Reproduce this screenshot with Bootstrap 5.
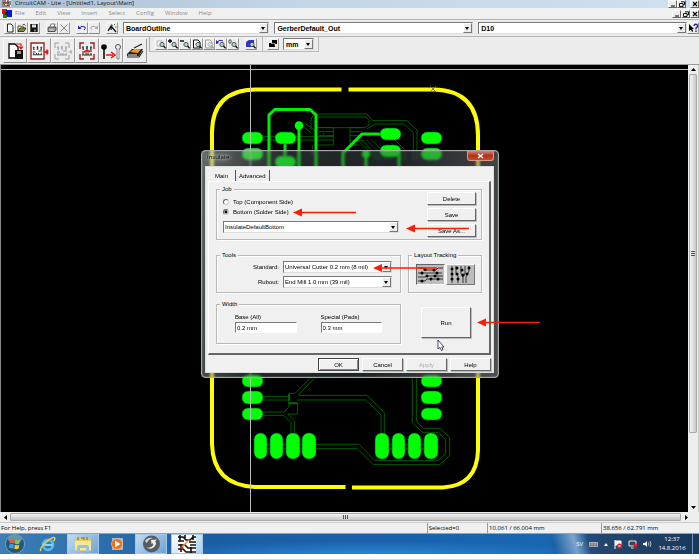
<!DOCTYPE html>
<html lang="en">
<head>
<meta charset="utf-8">
<meta name="viewport" content="width=device-width, initial-scale=1">
<title>CircuitCAM - Lite</title>
<link href="https://cdn.jsdelivr.net/npm/bootstrap@5.3.0/dist/css/bootstrap.min.css" rel="stylesheet">
<style>
body{font:6px/9px "Open Sans","Noto Sans",sans-serif;color:#000;background:#fff;overflow:hidden}
button,select,input{font:inherit;color:inherit;border-radius:0}
svg{display:block;flex:none}
.app{padding-bottom:6px}
.titlebar{height:8px;background:linear-gradient(90deg,#a9bfd4,#c2d5e8 40%,#cfe0ef);padding-left:2px}
.titlebar span.caption{line-height:6px;color:#111}
.winbtn{width:9px;height:8px;padding:0;border:1px solid;border-color:#fff #666 #666 #fff;background:#ececec;display:flex;align-items:center;justify-content:center}
.menubar{height:11px;background:#f0f0f0;padding-left:2px}
.menulist{gap:11px;margin-left:3px}
.menubar a{color:#8a8a8a;text-decoration:none;line-height:11px}
.toolrow{background:#ececec;border-top:1px solid #b4b4b4}
.row-one{height:17px;padding-left:4px}
.row-two{height:29px;padding-left:3px;border-bottom:1px solid #999}
.tool{width:12px;height:12px;padding:0;border:1px solid;border-color:#fafafa #999 #888 #fafafa;background:#ededed;display:flex;align-items:center;justify-content:center;flex:none}
.tool-lg{width:24px;height:25px}
.space{width:6px;flex:none}
.combos{padding-left:5px;gap:5px}
.combo{position:relative;min-width:0}
.combo select{appearance:none;width:100%;height:12px;display:block;border:1px solid;border-color:#777 #ddd #ddd #777;background:#fff;padding:0 10px 0 1px;line-height:9px;outline:0}
.combo::before{content:"";position:absolute;right:1px;top:1px;bottom:1px;width:9px;background:#ececec;border:1px solid;border-color:#fff #777 #777 #fff;pointer-events:none}
.combo::after{content:"";position:absolute;right:4px;top:5px;border:2px solid transparent;border-top:3px solid #000;border-bottom:0;pointer-events:none}
.toolcombo{font:bold 7px/9px "Liberation Sans",sans-serif}
.toolcombo select{padding-left:2px}
.layer{flex:148}.aperlist{flex:201}.aper{flex:211}.unit{width:31px}
.smallbar{height:15px;border-left:1px solid #aaa;border-right:1px solid #bbb;border-bottom:1px solid #bbb;padding:1px 5px;margin-left:2px}
.unitbar{padding:1px 4px;margin-left:0;gap:4px}
.work{min-height:447px}
.canvas{background:#000;position:relative;overflow:hidden;border-left:1px solid #888;min-width:0}
.board{margin-left:-1px}
.over{position:absolute;left:-1px;top:0;pointer-events:none;z-index:3}
.vbar{width:11px;background:#eee;border-right:1px solid #ccc}
.vthumb{flex:0 1 359px;width:8px;border:1px solid #aaa;background:linear-gradient(90deg,#f5f5f5,#c8c8c8);border-radius:1px}
.hbar{height:10px;background:#eee}
.hthumb{height:8px;border:1px solid #aaa;background:linear-gradient(#f4f4f4,#c4c4c4);border-radius:1px}
.barbtn{width:10px;height:9px;border:0;padding:0;background:transparent;display:flex;align-items:center;justify-content:center;flex:none}
.status{height:11px;background:#f0f0f0;border-top:1px solid #ccc;line-height:10px}
.status>div{white-space:nowrap;padding-left:1px}
.status>div+div{border-left:1px solid #999}
.st-a{flex:430}.st-b{flex:59}.st-c{flex:113}.st-d{flex:97}
.task{height:21px;background:radial-gradient(ellipse at 53% 100%,#2c83d2,transparent 45%),linear-gradient(75deg,transparent 79%,#7ba6cd 82%,transparent 84%),linear-gradient(90deg,#3e7eb4,#1b5da3 30%,#1767b3 78%,#23466e 86%,#18385e);border-top:1px solid #7fa8ca;color:#fff;padding-left:5px}
.task button{height:20px;padding:0;border:0;background:transparent;display:flex;align-items:center;justify-content:center}
.task .running{width:32px;border:1px solid #a5c8e6;background:linear-gradient(135deg,#c2dbef,#6ea4d3)}
.task .running.current{background:linear-gradient(135deg,#fff,#a8cff0)}
.quick{gap:10px}
.tray{gap:6px}
.task .desk{width:7px;border-left:1px solid #7793b0}
.clock{line-height:9px;width:40px}
.insulate{position:absolute;left:200px;top:85px;width:298px;padding:0 4px 4px 3px;border:1px solid #a5a9a9;border-radius:4px;background:linear-gradient(100deg,rgba(165,175,175,.6),rgba(90,100,105,.4) 25%,rgba(70,80,85,.45) 60%,rgba(130,135,135,.6));backdrop-filter:blur(1px);box-shadow:inset 0 0 1px #fff;font-family:"Liberation Sans",sans-serif;z-index:2}
.insulate header{height:15px;padding-left:2px;font:6px/13px "Open Sans",sans-serif;color:#000}
.insulate header span{text-shadow:0 0 3px #ddd,0 0 4px #ccc,0 0 6px #ccc}
.close-x{width:27px;height:10px;border:1px solid #d79a8c;border-top:0;border-radius:0 0 3px 3px;background:linear-gradient(#d68a78,#b52e16 50%,#c84a2c);padding:0;display:flex;align-items:center;justify-content:center}
.sheet{background:#f0f0f0;border:1px solid #ddd;padding:3px 2px 1px}
.tabs{height:11px}
.tabs button{border:0;background:transparent;padding:0 7px;line-height:10px;border-right:1px solid #555}
.tabs button+button{padding:1px 3px 0;line-height:10px}
.pane{border:1px solid;border-color:#fff #666 #666 #fff;padding:7px 8px 9px 7px;border-right-width:2px;border-bottom-width:2px;display:grid;grid-template-columns:185px 74px;column-gap:7px;row-gap:15px}
.group{border:1px solid #b8b8b8;box-shadow:inset 1px 1px #fff,1px 1px #fff;position:relative;margin:0;padding:0;min-width:0}
.group>legend{position:absolute;left:3px;top:-5px;font-size:6px;line-height:9px;background:#f0f0f0;padding:0 2px;width:auto;margin:0;float:none}
.job{grid-column:1/3;height:51px;padding:2px 5px 2px 6px}
.jobmain{width:176px;padding-top:5px}
.jobmain .combo{margin-top:4px}
.job label{line-height:10px;display:flex;align-items:center;gap:4px}
.job input{appearance:none;width:6px;height:6px;margin:0;border:1px solid;border-color:#666 #ccc #ccc #666;border-radius:50%;background:#fff}
.job input:checked{background:radial-gradient(circle,#000 1px,#fff 2px)}
.bevel{border:1px solid;border-color:#fff #666 #666 #fff;background:#f0f0f0;padding:0;line-height:10px;height:13px;box-shadow:1px 1px #bbb}
.bevel:disabled{color:#aaa}
.jobbtns{width:49px;gap:3px}
.tools{height:38px;padding:5px 8px 0 0;gap:3px}
.tools .combo{width:109px}
.tracking{height:38px;padding:8px 6px 0 7px}
.track{width:29px;height:21px;padding:0;border:1px solid;border-color:#fff #777 #777 #fff;background:#bdbdbd}
.track.active{border-color:#666 #fff #fff #666}
.sizes{height:40px;padding:8px 18px;gap:24px;margin-top:-4px}
.sizes>div{flex:1 1 0;min-width:0}
.sizes label{display:block;line-height:9px}
.sizes input{width:100%;height:11px;border:1px solid;border-color:#777 #fff #fff #777;padding:0 1px;background:#fff;display:block}
.run{width:50px;height:31px;margin:-1px 0 0 13px}
.foot{gap:3px;padding-top:3px}
.foot .bevel{width:41px}
.foot .default{border:1px solid #444;box-shadow:inset 1px 1px #fff,inset -1px -1px #888}
</style>
<script src="https://cdn.jsdelivr.net/npm/bootstrap@5.3.0/dist/js/bootstrap.bundle.min.js"></script>
</head>
<body>
<svg width="0" height="0" class="position-absolute" aria-hidden="true">
<defs>
<symbol id="lens" viewBox="0 0 10 10"><circle cx="6" cy="5.5" r="2.1" fill="#9fe0e0" stroke="#333" stroke-width=".8"/><path d="M7.5 7 9.6 9.3" stroke="#111" stroke-width="1.4"/></symbol>
<symbol id="pcb" viewBox="0 0 18 18"><path d="M4 5h2M8 5h2M12 5h2M5 7h1M8 7h2M12 7h1M4 13h10M5 11v2M8 11v2M10 11v2M13 11v2M5 5v3M9 4v3M13 5v3M4 10h3M10 9h4" stroke="currentColor" fill="none"/></symbol>
<symbol id="min" viewBox="0 0 6 6"><path d="M1 5h4" stroke="#000"/></symbol>
<symbol id="res" viewBox="0 0 6 6"><path d="M2 .8h3.5v3H4M.5 2.5H4v3H.5z" stroke="#000" stroke-width=".9" fill="none"/></symbol>
<symbol id="cls" viewBox="0 0 6 6"><path d="m1 1 4 4m0-4L1 5" stroke="#000" stroke-width="1.2"/></symbol>
</defs></svg>

<div class="app d-flex flex-column min-vh-100">
<div class="titlebar d-flex align-items-start">
<svg width="9" height="7" viewBox="0 0 9 7"><path d="M0 0h9v7H0z" fill="#eee"/><path d="M1 0v5M3 0v3M6 0v6M8 1v4M1 3h6M0 6h8" stroke="#222"/><path d="m2 5 4-4" stroke="#c33"/></svg>
<span class="caption ms-1">CircuitCAM - Lite - [Untitled1, Layout\Main]</span>
<div class="d-flex ms-auto"><button class="winbtn" aria-label="Minimize"><svg width="6" height="6"><use href="#min"/></svg></button><button class="winbtn" aria-label="Restore"><svg width="6" height="6"><use href="#res"/></svg></button><button class="winbtn ms-1" aria-label="Close"><svg width="6" height="6"><use href="#cls"/></svg></button></div>
</div>
<nav class="menubar d-flex align-items-center">
<svg width="10" height="9" viewBox="0 0 10 9"><path d="M0 0h5v5H0z" fill="#d11"/><path d="M4 1h6v7H4z" fill="#11d"/><path d="M1 5h4v4H1z" fill="#181"/><path d="M3 3h3v3H3z" fill="#222"/></svg>
<div class="menulist d-flex"><a href="#">File</a><a href="#">Edit</a><a href="#">View</a><a href="#">Insert</a><a href="#">Select</a><a href="#">Config</a><a href="#">Window</a><a href="#">Help</a></div>
<div class="d-flex ms-auto"><button class="winbtn" aria-label="Minimize document"><svg width="6" height="6"><use href="#min"/></svg></button><button class="winbtn" aria-label="Restore document"><svg width="6" height="6"><use href="#res"/></svg></button><button class="winbtn" aria-label="Close document"><svg width="6" height="6"><use href="#cls"/></svg></button></div>
</nav>

<div class="toolrow row-one d-flex align-items-center">
<button class="tool" aria-label="New"><svg width="10" height="10" viewBox="0 0 10 10"><path d="M2.5 1h3.5l2 2v6h-5.500z" fill="#fff" stroke="#111" stroke-width=".9"/></svg></button>
<button class="tool" aria-label="Open"><svg width="10" height="10" viewBox="0 0 10 10"><path d="M1 8.500V3h3l.5 1H7v1" fill="#ff8" stroke="#222" stroke-width=".8"/><path d="m1 8.500 2-3.500h6l-2 3.500z" fill="#883" stroke="#222" stroke-width=".8"/><path d="M5.500 2q2-1.500 3 .5" stroke="#111" fill="none" stroke-width=".8"/></svg></button>
<button class="tool" aria-label="Save"><svg width="10" height="10" viewBox="0 0 10 10"><path d="M1 1h8v8H1z" fill="#111"/><path d="M3 1.500h4v3H3z" fill="#ddd"/><path d="M1.500 1v8M8.500 1v8" stroke="#775" stroke-width=".7"/><path d="M5.500 6.500h1v2h-1z" fill="#eee"/></svg></button>
<span class="space"></span>
<button class="tool" aria-label="Print"><svg width="10" height="10" viewBox="0 0 10 10"><path d="m3 4 1-3h4L7 4" fill="#fff" stroke="#555" stroke-width=".8"/><path d="M1 4.500 2 4h7v3L8 8.500H1z" fill="#999" stroke="#333" stroke-width=".8"/><path d="M2 7h5" stroke="#ddd"/></svg></button>
<button class="tool" aria-label="Delete item"><svg width="10" height="10" viewBox="0 0 10 10"><path d="m1.500 1.500 7 7m0-7-7 7" stroke="#888"/></svg></button>
<span class="space"></span>
<button class="tool" aria-label="Undo"><svg width="10" height="10" viewBox="0 0 10 10"><path d="M2 5q3-3 6-1 .8 1.500-1 3" stroke="#22a" fill="none"/><path d="M1 2.500V6h3.500z" fill="#22a"/></svg></button>
<button class="tool" aria-label="Redo"><svg width="10" height="10" viewBox="0 0 10 10"><path d="M8 5Q5 2 2 4q-.8 1.500 1 3" stroke="#aaa" fill="none"/><path d="M9 2.500V6H5.500z" fill="#aaa"/></svg></button>
<span class="space"></span>
<button class="tool" aria-label="Wizard"><svg width="10" height="10" viewBox="0 0 10 10"><path d="m1 8 3-5v4M4 3l5 6" stroke="#111" stroke-width="1.300" fill="none"/><path d="m5 2 1 1m2-2L7 2m1 2h1.500" stroke="#383"/></svg></button>
<div class="toolcombo combos d-flex flex-grow-1">
<div class="combo layer"><select aria-label="Layer"><option>BoardOutline</option></select></div>
<div class="combo aperlist"><select aria-label="Aperture list"><option>GerberDefault_Out</option></select></div>
<div class="combo aper"><select aria-label="Aperture"><option>D10</option></select></div>
</div>
<button class="tool" aria-label="Context help"><svg width="11" height="10" viewBox="0 0 11 10"><path d="M1 1v7l2-1.500L4 9l1-.5L4.300 6H6z" fill="#000"/><path d="M6 3q.3-2 2.300-1.700Q10.300 2 9.300 3.800L8 5v1.500M8 7.500V9" stroke="#229" stroke-width="1.400" fill="none"/></svg></button>
</div>

<div class="toolrow row-two d-flex">
<div class="d-flex align-items-center">
<button class="tool tool-lg" aria-label="Import"><svg width="20" height="20" viewBox="0 0 20 20"><path d="M4 3h6l3 3v11H4z" fill="#fff" stroke="#000" stroke-width="1.300"/><path d="M10 9h8v9h-8z" fill="#111"/><path d="M12 10h4v3h-4z" fill="#997"/><path d="M11 3h5v4m-2-1.500L16 8l2-2.500" stroke="#e11" stroke-width="1.200" fill="none"/></svg></button>
<button class="tool tool-lg text-dark" aria-label="Isolate"><svg width="20" height="20" viewBox="0 0 20 20"><path d="M2 2h13v16H2z" fill="#fff" stroke="#922" stroke-width="1.400"/><use href="#pcb" width="17" height="18" y="1"/><path d="m15 11 4-2v4zM18 8v6" fill="#e11" stroke="#e11" stroke-width=".7"/></svg></button>
<button class="tool tool-lg text-secondary" aria-label="Isolate selection"><svg width="20" height="20" viewBox="0 0 20 20" opacity=".65"><path d="M6 2H2v5M12 2h4v5M2 13v5h4M12 18h4v-4" fill="none" stroke="#777"/><use href="#pcb" width="18" height="18" y="1"/><path d="m15 11 4-2v4z" fill="#999"/></svg></button>
<button class="tool tool-lg text-dark" aria-label="Rubout"><svg width="20" height="20" viewBox="0 0 20 20"><path d="M7 2H3v6M13 2h4v6M3 13v5h4M13 18h4v-5" fill="none" stroke="#922" stroke-width="1.400"/><use href="#pcb" width="18" height="18" x="1" y="1"/><path d="M6 11q4-5 8 0-4 1-8 0z" fill="#e22"/></svg></button>
<button class="tool tool-lg" aria-label="Convert"><svg width="22" height="20" viewBox="0 0 22 20"><circle cx="4" cy="6" r="2.800"/><path d="M4 7v11" stroke="#000" stroke-width="1.500"/><path d="M6 14h7M11 11l4 3-4 3" fill="none" stroke="#e11" stroke-width="1.500"/><circle cx="18" cy="6" r="2.500" fill="#eee" stroke="#555"/><path d="M17 8v10h2V8" fill="#fff" stroke="#555" stroke-width=".7"/></svg></button>
<button class="tool tool-lg" aria-label="Export"><svg width="20" height="20" viewBox="0 0 20 20"><path d="m2 13 5-5h11l-4 7H2z" fill="#222"/><path d="m5 11 4-3h7l-3 4z" fill="#f7941d"/><path d="m9 7 8-4M2 16h12l4-6" stroke="#222" stroke-width="1.200" fill="none"/><path d="M3 14h9" stroke="#eee"/></svg></button>
</div>
<div class="smallbar d-flex">
<button class="tool" aria-label="Zoom window"><svg width="10" height="10"><path d="M1 2h5v5H1z" fill="#fff" stroke="#999" stroke-width=".7"/><use href="#lens"/></svg></button>
<button class="tool" aria-label="Zoom in"><svg width="10" height="10"><path d="M0 2h4M2 0v4" stroke="#000" stroke-width="1.300"/><use href="#lens"/></svg></button>
<button class="tool" aria-label="Zoom out"><svg width="10" height="10"><path d="M0 2h4" stroke="#000" stroke-width="1.400"/><use href="#lens"/></svg></button>
<button class="tool" aria-label="Zoom page"><svg width="10" height="10"><path d="M1.500 1H6l2 2v6H1.500z" fill="#fff" stroke="#111"/><use href="#lens"/></svg></button>
<button class="tool" aria-label="Zoom selection"><svg width="10" height="10" opacity=".35"><path d="M1.500 1H6l2 2v6H1.500z" fill="#fff" stroke="#111"/><use href="#lens"/></svg></button>
<button class="tool" aria-label="Previous view"><svg width="10" height="10"><path d="M1 3q3-3 6-1" stroke="#22b" fill="none"/><path d="M0 1v4l3-1z" fill="#22b"/><use href="#lens"/></svg></button>
<button class="tool" aria-label="Actual size"><svg width="10" height="10"><ellipse cx="2" cy="2.500" rx="1.200" ry="1.800" fill="none" stroke="#222" stroke-width=".8"/><use href="#lens"/></svg></button>
<span class="space"></span>
<button class="tool" aria-label="Zoom layer"><svg width="10" height="10"><path d="m0 3 3-2h5v5L6 8H0z" fill="#33c"/><use href="#lens"/></svg></button>
</div>
<div class="smallbar unitbar d-flex border-start-0">
<button class="tool" aria-label="Layers"><svg width="10" height="10"><path d="M4 1h5v4H7v3H1V4h3z"/><path d="M3 4.500h4V7" stroke="#eee" fill="none" stroke-width=".6"/></svg></button>
<div class="combo toolcombo unit"><select aria-label="Unit"><option>mm</option></select></div>
</div>
</div>

<main class="work d-flex flex-grow-1">
<div class="canvas flex-grow-1">
<svg class="board" width="690" height="447" viewBox="0 65 690 447" role="img" aria-label="Circuit board layout">
<g fill="none" stroke="#006b00" stroke-width="2.600">
<g transform="translate(195 80) scale(.3333)">
<path d="M348 150v-30q4-18 20-18h148l17 20h103l30 28v90M368 111h145l9 10v14l-10 8H370M515 148l25-16h88l27 26v82M366 143h49v52h-49M372 155h43M372 167h43M375 180h40M203 170h212M203 180h172M325 140l25 20M330 130l35 25M500 143h-35v52h28M465 155h35M465 167h30M465 182h40M488 180l60 60M500 180l60 60M515 180l60 60M530 180l60 60M600 180l30 30v30M590 190l28 28v22M385 165v-5M352 195v30"/>
</g>
<g transform="translate(195 370) scale(.3333)">
<path d="M203 80h79V70h18l45-45M310 75l48-50M203 90h79v20l-14 16h-65M203 136h63l22 22v40M278 132l20 20v46M282 100h26v32h-30M310 76h206l52 52v70M305 90h207l46 45v63M652 25v133l30 29h48l22 21v42l-22 22H540l-48-49H362M665 25v130l21 20h49l29 28v53l-29 28H535l-48-48H362M210 223h130M210 236h130M575 223h130M575 236h130"/>
<path d="M280 100h28M282 72v20" stroke-width="6"/>
</g></g>
<g fill="none" stroke="#00ee00" stroke-width="3"><path d="M269 170v-55l6-5.500h35l6 5.500v55M299 125v45M285 137v24M390 134h-28l-19 19v15M366 154v16M399 152v18"/></g>
<g fill="#0f0"><circle cx="299" cy="125.500" r="4.300"/><circle cx="366" cy="154" r="4"/>
<g stroke="#053" stroke-width=".6"><rect x="242" y="132" width="21" height="12" rx="6"/><rect x="275" y="132" width="21" height="12" rx="6"/><rect x="380" y="128" width="21" height="12" rx="6"/><rect x="421" y="132" width="21" height="12" rx="6"/>
<rect x="242" y="148" width="21" height="12" rx="6"/><rect x="275" y="156" width="21" height="12" rx="6"/><rect x="380" y="145" width="21" height="12" rx="6"/><rect x="421" y="148" width="21" height="12" rx="6"/>
<rect x="242" y="375" width="21" height="12" rx="6"/><rect x="242" y="391" width="21" height="13" rx="6"/><rect x="242" y="408" width="21" height="12" rx="6"/><rect x="421" y="375" width="21" height="12" rx="6"/><rect x="421" y="391" width="21" height="13" rx="6"/><rect x="421" y="408" width="21" height="12" rx="6"/>
<rect x="254" y="433" width="13" height="26" rx="6.500"/><rect x="270" y="433" width="13" height="26" rx="6.500"/><rect x="286" y="433" width="14" height="26" rx="6.500"/><rect x="302" y="433" width="14" height="26" rx="6.500"/><rect x="375" y="433" width="14" height="26" rx="6.500"/><rect x="392" y="433" width="13" height="26" rx="6.500"/><rect x="408" y="433" width="13" height="26" rx="6.500"/><rect x="424" y="433" width="14" height="26" rx="6.500"/></g></g>
<path d="M341.500 89.500H256Q212 90 212 133v311q1 41 43 43h90.500M348.500 89.500H434q44 1 44 46v315q-1 35-35 37h-91" fill="none" stroke="#ff0" stroke-width="4"/>
<path d="M250.500 65v447M0 69.500h690" stroke="#bbb" fill="none"/>
<path d="m430 86 6 6m0-6-6 6" stroke="#665" stroke-width=".8"/>
</svg>

<section class="insulate" role="dialog" aria-label="Insulate">
<header class="d-flex align-items-start justify-content-between"><span>Insulate</span><button class="close-x" aria-label="Close dialog"><svg width="7" height="6" viewBox="0 0 7 6"><path d="m1 1 5 4m0-4L1 5" stroke="#fff" stroke-width="1.600"/></svg></button></header>
<div class="sheet">
<div class="tabs d-flex"><button>Main</button><button>Advanced</button></div>
<div class="pane">
<fieldset class="group job d-flex justify-content-between"><legend>Job</legend>
<div class="jobmain">
<label><input type="radio" name="side">Top (Component Side)</label>
<label><input type="radio" name="side" checked>Bottom (Solder Side)</label>
<div class="combo"><select aria-label="Job name"><option>InsulateDefaultBottom</option></select></div>
</div>
<div class="jobbtns d-flex flex-column"><button class="bevel">Delete</button><button class="bevel">Save</button><button class="bevel">Save As...</button></div>
</fieldset>
<fieldset class="group tools d-flex flex-column"><legend>Tools</legend>
<div class="d-flex justify-content-end align-items-center gap-1"><label for="std">Standard:</label><div class="combo"><select id="std"><option>Universal Cutter 0.2 mm (8 mil)</option></select></div></div>
<div class="d-flex justify-content-end align-items-center gap-1"><label for="rub">Rubout:</label><div class="combo"><select id="rub"><option>End Mill 1.0 mm (39 mil)</option></select></div></div>
</fieldset>
<fieldset class="group tracking d-flex justify-content-between"><legend class="text-nowrap">Layout Tracking</legend>
<button class="track active" aria-label="Horizontal tracking"><svg width="27" height="19" viewBox="0 0 27 19"><path d="M1 3h6l2 2h10l2-2h5M1 8h24M1 12h7l2-1h16M1 16h7l2-2h16" stroke="#111" fill="none" stroke-width=".8"/><g><circle cx="8" cy="4.500" r="1.500"/><circle cx="17" cy="5" r="1.500"/><circle cx="5" cy="8" r="1.500"/><circle cx="20" cy="8" r="1.500"/><circle cx="10" cy="11" r="1.500"/><circle cx="18" cy="11" r="1.500"/><circle cx="5" cy="16" r="1.500"/><circle cx="14" cy="14" r="1.500"/><circle cx="21" cy="14" r="1.500"/></g></svg></button>
<button class="track" aria-label="Vertical tracking"><svg width="27" height="19" viewBox="0 0 27 19"><path d="M5 1v17M9 1v7l2 3v7M14 1v8l2 3v6M18 1v7l-2 4M22 1v5l-3 6v6" stroke="#111" fill="none" stroke-width=".8"/><g><circle cx="5" cy="4" r="1.500"/><circle cx="5" cy="9" r="1.500"/><circle cx="5" cy="14" r="1.500"/><circle cx="10" cy="3" r="1.500"/><circle cx="10" cy="9" r="1.500"/><circle cx="11" cy="14" r="1.500"/><circle cx="15" cy="5" r="1.500"/><circle cx="16" cy="10" r="1.500"/><circle cx="22" cy="3" r="1.500"/><circle cx="20" cy="9" r="1.500"/></g></svg></button>
</fieldset>
<fieldset class="group sizes d-flex"><legend>Width</legend>
<div><label for="base">Base (All)</label><input id="base" size="1" value="0.2 mm"></div>
<div><label for="special">Special (Pads)</label><input id="special" size="1" value="0.3 mm"></div>
</fieldset>
<button class="bevel run">Run</button>
</div>
<div class="foot d-flex justify-content-end"><button class="bevel default">OK</button><button class="bevel">Cancel</button><button class="bevel" disabled>Apply</button><button class="bevel">Help</button></div>
</div>
</section>

<svg class="over" width="690" height="447" viewBox="0 65 690 447" aria-hidden="true">
<g stroke="#ff1a00" stroke-width="1.700" fill="#ff1a00"><path d="M300 212.500h56M413 228.500h56M380 268h57M484 322.500h56"/><g stroke="none"><path d="m293 212.500 9-4v8zM406 228.500l9-4v8zM373 268l9-4v8zM477 322.500l9-4v8z"/></g></g>
<path d="M438 340v9l2-1.500 1.500 3 1.500-.8-1.300-2.700h2.300z" fill="#fff" stroke="#223" stroke-width=".8"/>
</svg>
</div>
<div class="vbar d-flex flex-column align-items-center">
<button class="barbtn" aria-label="Scroll up"><svg width="5" height="3"><path d="M0 3 2.500 0 5 3z"/></svg></button>
<div class="vthumb d-flex align-items-center justify-content-center"><svg width="4" height="5"><path d="M0 .5h4M0 2.500h4M0 4.500h4" stroke="#555"/></svg></div>
<button class="barbtn mt-auto" aria-label="Scroll down"><svg width="5" height="3"><path d="M0 0h5L2.500 3z"/></svg></button>
</div>
</main>
<div class="hbar d-flex align-items-center pe-2">
<button class="barbtn" aria-label="Scroll left"><svg width="3" height="5"><path d="M3 0v5L0 2.500z"/></svg></button>
<div class="hthumb flex-grow-1 d-flex align-items-center justify-content-center"><svg width="5" height="4"><path d="M.5 0v4M2.500 0v4M4.500 0v4" stroke="#555"/></svg></div>
<button class="barbtn" aria-label="Scroll right"><svg width="3" height="5"><path d="M0 0v5l3-2.500z"/></svg></button>
</div>
<footer class="status d-flex"><div class="st-a">For Help, press F1</div><div class="st-b">Selected=0</div><div class="st-c">10.061 / 66.004 mm</div><div class="st-d">38.656 / 62.791 mm</div></footer>
<div class="task d-flex align-items-center">
<div class="quick d-flex align-items-center">
<button class="me-1" aria-label="Start"><svg width="20" height="20" viewBox="0 0 20 20"><circle cx="10" cy="10" r="9.500" fill="#24577f" stroke="#8ab6d0" stroke-width=".7"/><ellipse cx="10" cy="5" rx="7" ry="4" fill="#94bdd0" opacity=".6"/><path d="M5 6q2-1.500 4.500-.5L9 9.500q-2-1-4.500 0z" fill="#f25c22"/><path d="M10.500 5.800q2 1.200 4.500 0l-.6 4q-2 1-4.400-.1z" fill="#8dc63f"/><path d="M4.300 10.500q2-1 4.500 0l-.5 4q-2-1-4.300-.2z" fill="#39a5e8"/><path d="M9.800 10.800q2 1 4.400 0l-.5 3.800q-2 1-4.400.1z" fill="#ffc91f"/></svg></button>
<button aria-label="Internet Explorer"><svg width="18" height="20" viewBox="0 0 20 20"><circle cx="10" cy="11" r="5.500" fill="none" stroke="#55bdf2" stroke-width="3"/><path d="M6 11h9" stroke="#8bdcff" stroke-width="2.200"/><path d="M2 18q-2-3 6-10 7-6 9-5 1.500 1-1 4" stroke="#f6cf42" stroke-width="1.600" fill="none"/></svg></button>
<button class="running" aria-label="Explorer"><svg width="20" height="17" viewBox="0 0 20 17"><path d="M2 3 4 1h4l1 1h7l2 2v11H2z" fill="#edc95a"/><path d="M2 5h16v9H2z" fill="#fae697"/><path d="M5 1v3M9 1v2M14 1v3" stroke="#3a8" stroke-width="1.500"/><path d="M11 1v3" stroke="#d33"/><path d="M4 16v-5q0-2 2-2h8q2 0 2 2v5h-3v-4H7v4z" fill="#8fc6e8"/></svg></button>
<button aria-label="Media Player"><svg width="16" height="16" viewBox="1 0 16 16"><path d="M4 2h11v12H4z" fill="#a9cfe8" opacity=".8"/><circle cx="9" cy="8" r="5.500" fill="#f36a16" stroke="#ffd2a8" stroke-width=".6"/><path d="m7 4.500 5.500 3.500L7 11.500z" fill="#fff"/></svg></button>
<button class="running" aria-label="Sync"><svg width="19" height="18" viewBox="0 0 19 18"><circle cx="9.500" cy="9" r="8.500" fill="#555c62"/><path d="M4 12q5 4 9-1 2-3 0-4.500l2-2-6 .5.500 4 1.500-1q1 2-1 3.500-3 2-6 .5z" fill="#eee"/><path d="M3 6q3-4 8-3Q6 4 5 8z" fill="#ddd"/></svg></button>
</div>
<button class="running current ms-1" aria-label="CircuitCAM"><svg width="18" height="18" viewBox="0 0 18 18"><path d="M0 0h18v18H0z" fill="#fff"/><path d="M0 2h5l3 3h4l3-3h3M0 6h6M11 7h7M0 10h7l3 3h8M0 14h5l3 3h10M12 10h6M2 0v6M7 0v3M15 0v5M3 9v8M13 12v6" stroke="#111" stroke-width="1.600" fill="none"/><path d="m3 13 8-8" stroke="#ee8d38" stroke-width="1.500"/><circle cx="4" cy="13" r="1.500" fill="#c22"/></svg></button>
<div class="tray ms-auto d-flex align-items-center"><span>SV</span>
<svg width="9" height="6" viewBox="0 0 9 6"><path d="M0 1h9v5H0z" fill="#aaa"/><path d="M1 3h7M1 4.500h7" stroke="#555" stroke-dasharray="1 .5" stroke-width=".8"/></svg>
<svg width="4" height="3"><path d="M0 3 2 0l2 3z" fill="#fff"/></svg>
<svg width="8" height="9" viewBox="0 0 8 9"><path d="M1 0v9M1 1h6v4H1" fill="#eee" stroke="#fff"/><circle cx="5.500" cy="6" r="2.500" fill="#d22"/><path d="m4.500 5 2 2m0-2-2 2" stroke="#fff" stroke-width=".7"/></svg>
<svg width="9" height="9" viewBox="0 0 9 9"><path d="M1 1h7v5H1zM3 8h3" fill="#345" stroke="#eee"/><path d="m5 4 4 4m0-4L5 8" stroke="#e11" stroke-width="1.400"/></svg>
<svg width="9" height="8" viewBox="0 0 9 8"><path d="M0 3h2l2-2v6L2 5H0z" fill="#fff"/><path d="M5.500 2.500q1 1.500 0 3M7 1q2 3 0 6" stroke="#ddd" fill="none" stroke-width=".8"/></svg></div>
<div class="clock text-center">12:37<br>14.8.2016</div>
<button class="desk" aria-label="Show desktop"></button>
</div>
</div>
</body>
</html>
